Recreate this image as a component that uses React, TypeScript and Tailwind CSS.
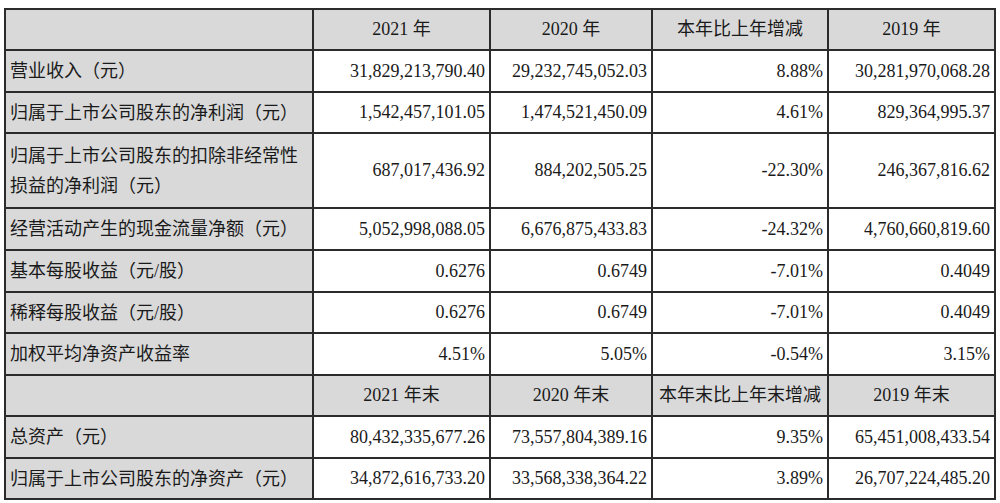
const FONT = "font-['Liberation_Serif','Noto_Sans_CJK_SC',serif]";

type Row = { label: string[]; values: string[]; h: string };

const TOP: Row[] = [
  { label: ["营业收入（元）"], values: ["31,829,213,790.40", "29,232,745,052.03", "8.88%", "30,281,970,068.28"], h: "h-[42px]" },
  { label: ["归属于上市公司股东的净利润（元）"], values: ["1,542,457,101.05", "1,474,521,450.09", "4.61%", "829,364,995.37"], h: "h-[41px]" },
  { label: ["归属于上市公司股东的扣除非经常性", "损益的净利润（元）"], values: ["687,017,436.92", "884,202,505.25", "-22.30%", "246,367,816.62"], h: "h-[75px]" },
  { label: ["经营活动产生的现金流量净额（元）"], values: ["5,052,998,088.05", "6,676,875,433.83", "-24.32%", "4,760,660,819.60"], h: "h-[42px]" },
  { label: ["基本每股收益（元/股）"], values: ["0.6276", "0.6749", "-7.01%", "0.4049"], h: "h-[42px]" },
  { label: ["稀释每股收益（元/股）"], values: ["0.6276", "0.6749", "-7.01%", "0.4049"], h: "h-[41px]" },
  { label: ["加权平均净资产收益率"], values: ["4.51%", "5.05%", "-0.54%", "3.15%"], h: "h-[42px]" },
];

const BOTTOM: Row[] = [
  { label: ["总资产（元）"], values: ["80,432,335,677.26", "73,557,804,389.16", "9.35%", "65,451,008,433.54"], h: "h-[42px]" },
  { label: ["归属于上市公司股东的净资产（元）"], values: ["34,872,616,733.20", "33,568,338,364.22", "3.89%", "26,707,224,485.20"], h: "h-[41px]" },
];

const CELL = "border-2 border-[#2b2b2b]";

function HeaderRow({ cols, h }: { cols: string[]; h: string }) {
  return (
    <tr className={`${h} bg-[#d9d9d9]`}>
      <td className={CELL} />
      {cols.map((c) => (
        <td key={c} className={`${CELL} text-center px-1 whitespace-nowrap`}>
          {c}
        </td>
      ))}
    </tr>
  );
}

function DataRow({ row }: { row: Row }) {
  return (
    <tr className={row.h}>
      <td className={`${CELL} bg-[#d9d9d9] px-1 leading-[30px] align-middle`}>
        {row.label.map((l) => (
          <div key={l} className="whitespace-nowrap">{l}</div>
        ))}
      </td>
      {row.values.map((v, i) => (
        <td key={i} className={`${CELL} bg-white text-right px-1 whitespace-nowrap`}>
          {v}
        </td>
      ))}
    </tr>
  );
}

export default function App() {
  return (
    <div className={`w-[1000px] h-[503px] bg-white pt-2 pl-1 text-[18px] text-[#1a1a1a] ${FONT}`}>
      <table className="w-[990px] table-fixed border-collapse">
        <colgroup>
          <col className="w-[308px]" />
          <col className="w-[177px]" />
          <col className="w-[162px]" />
          <col className="w-[176px]" />
          <col className="w-[167px]" />
        </colgroup>
        <tbody>
          <HeaderRow cols={["2021 年", "2020 年", "本年比上年增减", "2019 年"]} h="h-[41px]" />
          {TOP.map((r) => (
            <DataRow key={r.label.join("")} row={r} />
          ))}
          <HeaderRow cols={["2021 年末", "2020 年末", "本年末比上年末增减", "2019 年末"]} h="h-[41px]" />
          {BOTTOM.map((r) => (
            <DataRow key={r.label.join("")} row={r} />
          ))}
        </tbody>
      </table>
    </div>
  );
}
